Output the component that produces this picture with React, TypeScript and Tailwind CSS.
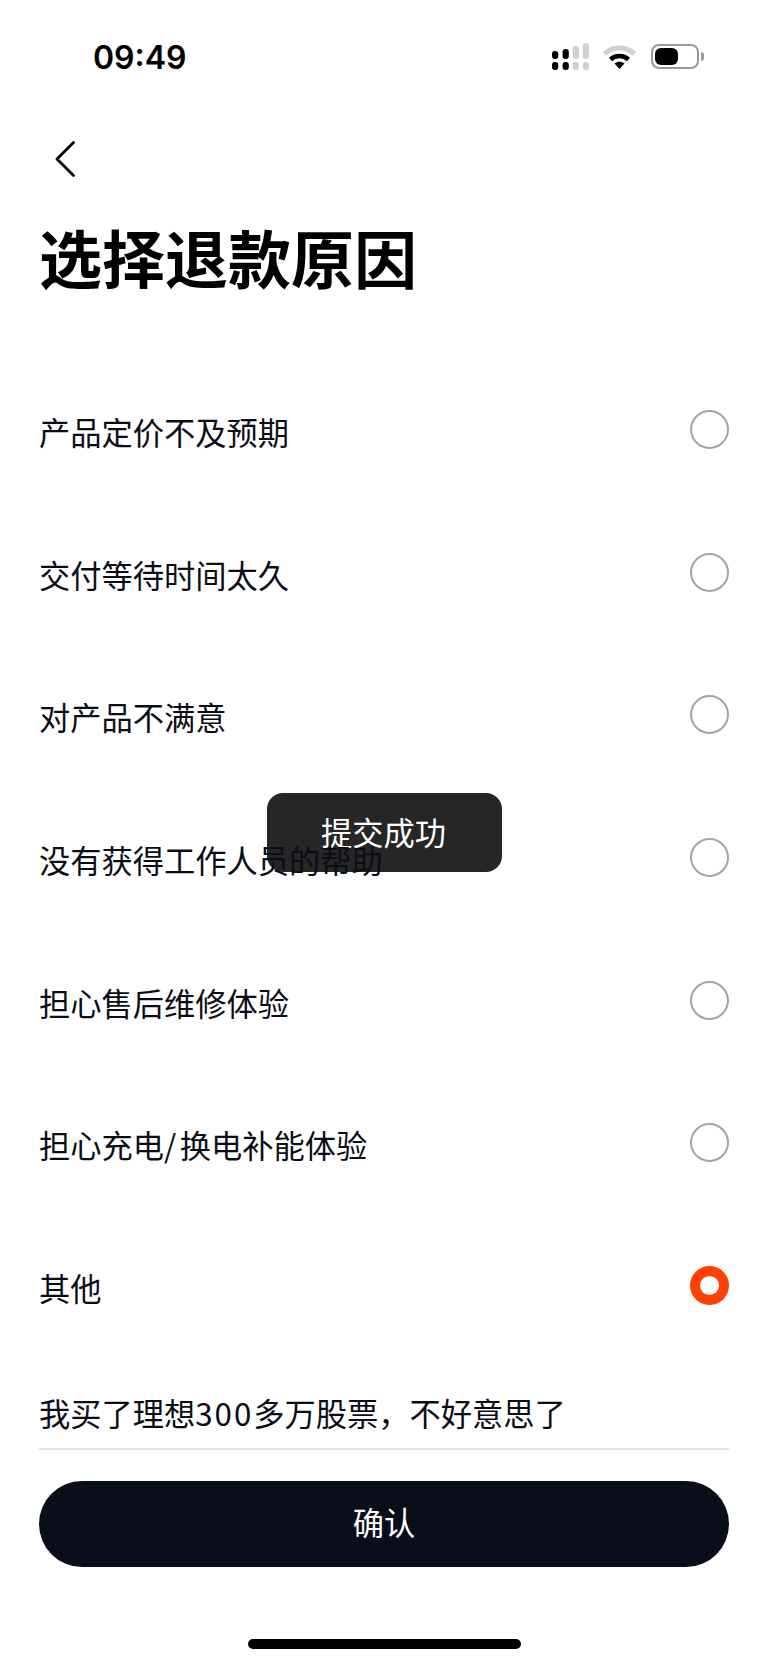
const cjk = "font-['Noto_Sans_CJK_SC','Noto_Sans',sans-serif]"

function SignalIcon() {
  return (
    <svg width="37.5" height="27" viewBox="0 0 39 27" preserveAspectRatio="none" aria-hidden="true">
      <rect x="0" y="8" width="6.5" height="8" rx="3" fill="#000" />
      <rect x="0" y="19" width="6.5" height="8" rx="3" fill="#000" />
      <rect x="11" y="6" width="6.5" height="10" rx="3" fill="#000" />
      <rect x="11" y="19" width="6.5" height="8" rx="3" fill="#000" />
      <rect x="21.5" y="3" width="6.5" height="13" rx="3" fill="#d0d0d0" />
      <rect x="21.5" y="19" width="6.5" height="8" rx="3" fill="#d0d0d0" />
      <rect x="32" y="0" width="6.5" height="16" rx="3" fill="#d0d0d0" />
      <rect x="32" y="19" width="6.5" height="8" rx="3" fill="#d0d0d0" />
    </svg>
  )
}

function WifiIcon() {
  return (
    <svg width="33" height="24" viewBox="0 0 33 24" aria-hidden="true">
      <path d="M1.5 9C9.5 1 23.5 1 31.5 9" fill="none" stroke="#cfcfcf" strokeWidth="5" />
      <path d="M7.5 14.5C12.5 9.8 20.5 9.8 25.5 14.5" fill="none" stroke="#000" strokeWidth="4.5" />
      <path d="M11.5 18.5C14.5 16.3 18.5 16.3 21.5 18.5L16.5 24Z" fill="#000" />
    </svg>
  )
}

function BatteryIcon() {
  return (
    <div className="flex items-center">
      <div className="flex h-[25px] w-[48px] items-center rounded-[8px] border-2 border-[#9a9a9a] p-[2px]">
        <div className="h-full w-[23px] rounded-[6px] bg-black" />
      </div>
      <div className="ml-[2px] h-[9px] w-[3px] rounded-r-full bg-[#9a9a9a]" />
    </div>
  )
}

function ReasonRow({ children, selected }: { children: React.ReactNode; selected?: boolean }) {
  return (
    <div className="flex h-[142.7px] items-center justify-between">
      <span className="relative z-10 mb-[3px] text-[31.25px] leading-[40px] text-[#0b0d16]">{children}</span>
      {selected ? (
        <span className="mb-2 flex h-[39px] w-[39px] items-center justify-center rounded-full bg-[#ff4000]">
          <span className="h-[19px] w-[19px] rounded-full bg-white" />
        </span>
      ) : (
        <span className="mb-2 h-[39px] w-[39px] rounded-full border-2 border-[#a3a3ad]" />
      )}
    </div>
  )
}

export default function App() {
  return (
    <div className={`relative flex h-[1665px] w-[769px] flex-col overflow-hidden bg-white ${cjk}`}>
      <div className="flex h-[126px] shrink-0 items-start justify-between pt-[38px] pr-[65px] pl-[93px]">
        <span className="font-['Inter',sans-serif] text-[32px] leading-[40px] font-semibold text-black">09:49</span>
        <div className="flex items-center pt-[5px]">
          <SignalIcon />
          <div className="mr-[15px] ml-[14px]">
            <WifiIcon />
          </div>
          <BatteryIcon />
        </div>
      </div>

      <div className="flex h-[66px] shrink-0 items-center pl-[55px]">
        <svg width="20" height="36" viewBox="0 0 20 36" fill="none" aria-hidden="true">
          <path d="M18.5 1.5L2 18L18.5 34.5" stroke="#000" strokeWidth="2.8" strokeLinecap="round" strokeLinejoin="round" />
        </svg>
      </div>

      <h1 className="mt-[24px] h-[146px] shrink-0 pl-[39px] text-[63px] leading-[80px] font-bold text-black">
        选择退款原因
      </h1>

      <div className="flex flex-1 flex-col pr-[40px] pl-[39px]">
        <ReasonRow>产品定价不及预期</ReasonRow>
        <ReasonRow>交付等待时间太久</ReasonRow>
        <ReasonRow>对产品不满意</ReasonRow>
        <ReasonRow>没有获得工作人员的帮助</ReasonRow>
        <ReasonRow>担心售后维修体验</ReasonRow>
        <ReasonRow>
          担心充电<span className="tracking-[3.5px]">/</span>换电补能体验
        </ReasonRow>
        <ReasonRow selected>其他</ReasonRow>

        <div className="mt-[-2px] border-b-2 border-[#e0e0e6] pt-[34px] pb-[15px] text-[31.25px] leading-[40px] text-[#0b0d16]">
          我买了理想<span className="tracking-[2px]">300</span>多万股票，不好意思了
        </div>

        <button className="mt-[31px] flex h-[86px] items-center justify-center rounded-full bg-[#0a0d1a] pb-[3px] text-[31.25px] text-white">
          确认
        </button>

        <div className="mt-[72px] h-[10px] w-[273px] self-center rounded-full bg-black" />
      </div>

      <div className="absolute top-[793px] left-[267px] flex h-[79px] w-[235px] items-center justify-center rounded-[16px] bg-[#262626] pr-[2px] text-[31.25px] text-white">
        提交成功
      </div>
    </div>
  )
}
